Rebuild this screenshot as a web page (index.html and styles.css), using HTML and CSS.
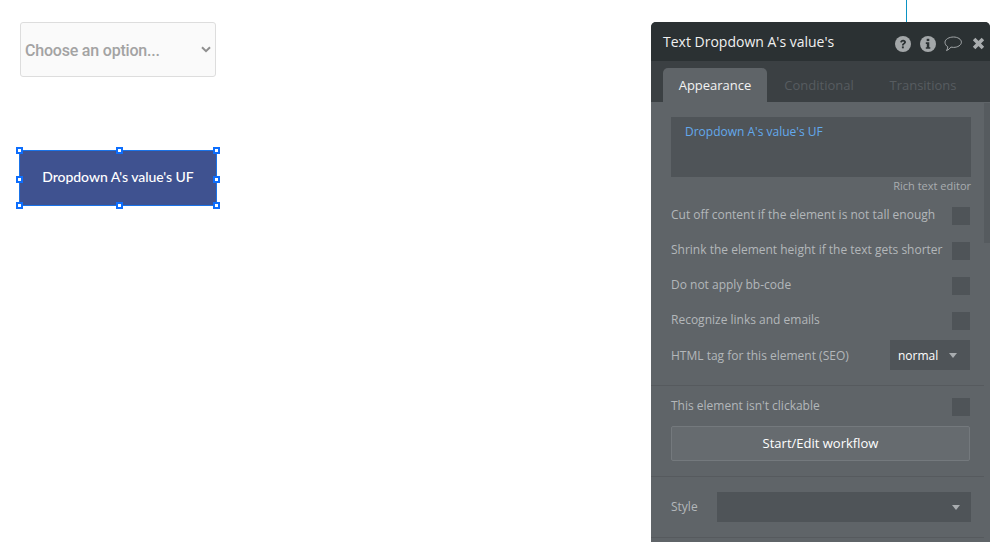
FILE: index.html
```html
<!DOCTYPE html>
<html lang="en">
<head>
<meta charset="utf-8">
<title>Text Dropdown A's value's</title>
<link rel="stylesheet" href="styles.css">
</head>
<body>
<main class="canvas">
  <div class="dropdown">
    <span>Choose an option...</span>
    <svg class="chev" width="10" height="7" viewBox="0 0 10 7"><path d="M1 1.2l4 4 4-4" fill="none" stroke="#8f8f8f" stroke-width="2"/></svg>
  </div>
  <div class="textel">
    Dropdown A's value's UF
    <i class="h tl"></i><i class="h tc"></i><i class="h tr"></i>
    <i class="h ml"></i><i class="h mr"></i>
    <i class="h bl"></i><i class="h bc"></i><i class="h br"></i>
  </div>
  <div class="link-line"></div>

  <section class="panel">
    <header class="head">
      <h1>Text Dropdown A's value's</h1>
      <div class="icons">
        <svg width="16" height="16" viewBox="0 0 16 16"><circle cx="8" cy="8" r="8" fill="#a3a7a9"/><path d="M5.2 6.2C5.3 4.6 6.5 3.7 8.1 3.7c1.700 0 2.900 1 2.900 2.400 0 1.200-.7 1.700-1.500 2.200-.6.4-.8.6-.8 1.200H7c0-1.200.4-1.700 1.100-2.200.6-.4 1-.6 1-1.100 0-.5-.4-.8-1-.8-.7 0-1.100.4-1.200 1z" fill="#2b3133"/><rect x="6.900" y="10.400" width="1.900" height="1.900" fill="#2b3133"/></svg>
        <svg width="16" height="16" viewBox="0 0 16 16"><circle cx="8" cy="8" r="8" fill="#a3a7a9"/><rect x="6.700" y="2.800" width="2.600" height="2.300" fill="#2b3133"/><path d="M5.800 6.300h3.500v4.900h1v1.600H5.800v-1.600h1V7.900h-1z" fill="#2b3133"/></svg>
        <svg class="bubble" width="18" height="16" viewBox="0 0 18 16"><path d="M9.500 1c4.200 0 7.900 2.200 7.900 5.200s-3.700 5.200-7.900 5.200c-.9 0-1.800-.1-2.600-.3-1 1.500-2.500 2.800-4.400 3.500.7-1 1.200-2.300 1.300-3.800C2 9.800 1 8.100 1 6.200 1 3.200 5.300 1 9.500 1z" fill="none" stroke="#a3a7a9" stroke-width="1"/></svg>
        <svg class="close" width="13" height="13" viewBox="0 0 13 13"><path d="M2.100 2.100l8.800 8.800M10.900 2.100l-8.800 8.800" stroke="#a9adaf" stroke-width="3.600" fill="none"/></svg>
      </div>
    </header>
    <nav class="tabs">
      <span class="tab active">Appearance</span>
      <span class="tab">Conditional</span>
      <span class="tab">Transitions</span>
    </nav>
    <div class="scrollbar"></div>
    <div class="body">
      <div class="group first">
        <div class="rich">Dropdown A's value's UF</div>
        <div class="rich-link">Rich text editor</div>
        <div class="checks">
          <div class="row"><span>Cut off content if the element is not tall enough</span><b class="box"></b></div>
          <div class="row"><span>Shrink the element height if the text gets shorter</span><b class="box"></b></div>
          <div class="row"><span>Do not apply bb-code</span><b class="box"></b></div>
          <div class="row"><span>Recognize links and emails</span><b class="box"></b></div>
          <div class="row tag"><span>HTML tag for this element (SEO)</span><div class="select"><em>normal</em><i class="caret"></i></div></div>
        </div>
      </div>
      <div class="group second">
        <div class="row"><span>This element isn't clickable</span><b class="box"></b></div>
        <div class="workflow">Start/Edit workflow</div>
      </div>
      <div class="group third">
        <span class="style-label">Style</span>
        <div class="style-select"><i class="caret"></i></div>
      </div>
    </div>
  </section>
</main>
</body>
</html>
```
FILE: styles.css
```css
* { box-sizing: border-box; }
html, body { margin: 0; height: 100%; background: #fff; overflow: hidden; }
.canvas { position: relative; width: 990px; height: 542px; overflow: hidden; font-family: "Open Sans", sans-serif; }

.dropdown {
  position: absolute; left: 20px; top: 22px; width: 196px; height: 55px;
  display: flex; align-items: center; justify-content: space-between;
  padding: 2px 4px 0 4px;
  background: #fafafa; border: 1px solid #ddd; border-radius: 3px;
  font-family: Roboto, sans-serif; font-weight: 500; font-size: 16px; letter-spacing: -0.2px; color: #a3a3a3;
}
.chev { margin-top: -2px; }

.textel {
  position: absolute; left: 19px; top: 150px; width: 198px; height: 56px;
  display: flex; align-items: center; justify-content: center;
  background: #3f5290; border: 1px solid #1a73e8;
  font-family: Lato, sans-serif; font-weight: 500; font-size: 14px; letter-spacing: -0.06px; color: #fff;
  padding-bottom: 3px;
}
.h { position: absolute; width: 7px; height: 7px; background: #fff; border: 2px solid #0d6efd; }
.tl { left: -4px; top: -4px; } .tc { left: 96px; top: -4px; } .tr { right: -4px; top: -4px; }
.ml { left: -4px; top: 25px; } .mr { right: -4px; top: 25px; }
.bl { left: -4px; bottom: -4px; } .bc { left: 96px; bottom: -4px; } .br { right: -4px; bottom: -4px; }

.link-line { position: absolute; left: 906px; top: 0; width: 1px; height: 22px; background: #0b93c4; }

.panel {
  position: absolute; left: 651px; top: 22px; width: 339px; height: 520px;
  background: #5f6468; border-radius: 5px 5px 0 0; overflow: hidden;
}
.head {
  height: 39px; background: #2b3133; display: flex; align-items: center; justify-content: space-between;
  padding: 0 5px 0 12px;
}
.head h1 { margin: 0; font-size: 14px; font-weight: 400; color: #f0f0f0; }
.icons { display: flex; align-items: center; gap: 9px; margin-top: 4px; }
.icons svg { display: block; }
.bubble { margin-left: -1px; }
.close { margin-left: 1px; }
.tabs { height: 41px; background: #3b4043; display: flex; align-items: flex-end; padding-left: 12px; }
.tab { width: 104px; height: 34px; display: flex; align-items: center; justify-content: center; font-size: 13px; color: #575c60; border-radius: 5px 5px 0 0; }
.tab.active { background: #5f6468; color: #f2f2f2; }
.scrollbar { position: absolute; right: 0; top: 81px; width: 6px; height: 140px; background: #565b5f; }
.body { padding-right: 6px; font-size: 12px; color: #b3b7ba; }
.group { border-bottom: 1px solid #565a5e; padding-left: 20px; padding-right: 13px; }
.first { height: 284px; padding-top: 15px; }
.second { height: 91px; padding-top: 12px; }
.third { height: 61px; display: flex; align-items: center; }
.rich { height: 60px; width: 300px; background: #4f5458; padding: 6px 14px; color: #63a9ec; line-height: 17px; }
.rich-link { width: 300px; text-align: right; font-size: 11px; line-height: 15px; margin-top: 1px; color: #a9adb0; }
.checks { margin-top: 14px; }
.row { display: flex; align-items: center; justify-content: space-between; height: 18px; width: 299px; margin-bottom: 17px; }
.row span { margin-top: -3px; }
.box { display: block; width: 18px; height: 18px; background: #4f5458; }
.row.tag { margin-top: -7px; height: 30px; }
.row.tag span { margin-top: 0; }
.select { width: 80px; height: 30px; background: #4f5458; display: flex; align-items: center; padding-left: 8px; }
.select em { font-style: normal; color: #fff; font-size: 12px; font-weight: 500; }
.select .caret { margin-left: 11px; }
.caret { display: block; width: 0; height: 0; border-left: 4.500px solid transparent; border-right: 4.500px solid transparent; border-top: 5px solid #a9adb0; }
.second .row { margin-bottom: 10px; }
.workflow {
  width: 299px; height: 35px; display: flex; align-items: center; justify-content: center; padding-bottom: 2px;
  background: #666b6f; border: 1px solid #74797d; border-radius: 2px; color: #fff; font-size: 13px; font-weight: 500;
}
.style-label { width: 46px; margin-top: -2px; }
.style-select { width: 254px; height: 30px; background: #4f5458; display: flex; align-items: center; justify-content: flex-end; padding-right: 11px; }
```
